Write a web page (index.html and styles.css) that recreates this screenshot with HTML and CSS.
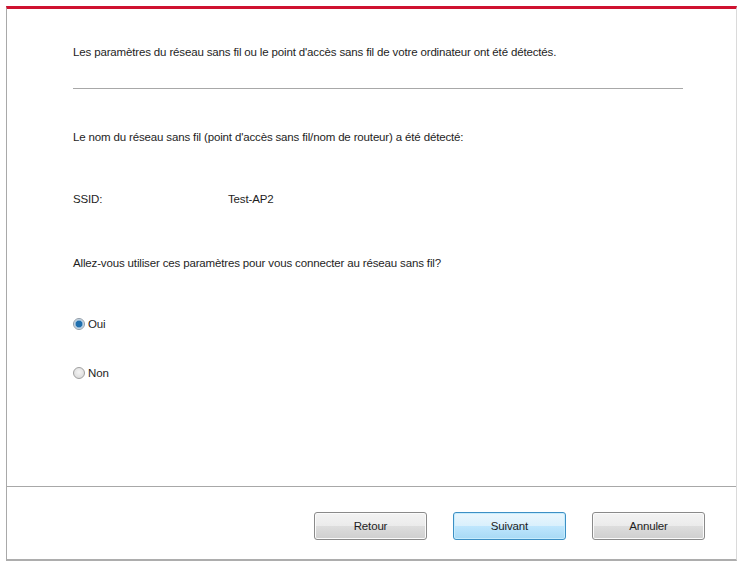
FILE: index.html
```html
<!DOCTYPE html>
<html lang="fr">
<head>
<meta charset="utf-8">
<title>Réseau sans fil</title>
<link rel="stylesheet" href="styles.css">
</head>
<body>
<div class="window">
  <div class="main">
    <p class="line first">Les paramètres du réseau sans fil ou le point d'accès sans fil de votre ordinateur ont été détectés.</p>
    <div class="sep"></div>
    <p class="line l2">Le nom du réseau sans fil (point d'accès sans fil/nom de routeur) a été détecté:</p>
    <div class="line ssid"><span class="ssid-label">SSID:</span><span>Test-AP2</span></div>
    <p class="line q">Allez-vous utiliser ces paramètres pour vous connecter au réseau sans fil?</p>
    <div class="line radio oui"><span class="dot checked"></span><span>Oui</span></div>
    <div class="line radio non"><span class="dot"></span><span>Non</span></div>
  </div>
  <div class="footer">
    <button class="btn">Retour</button>
    <button class="btn primary">Suivant</button>
    <button class="btn">Annuler</button>
  </div>
</div>
</body>
</html>
```
FILE: styles.css
```css
html, body {
  margin: 0;
  padding: 0;
  background: #ffffff;
}
body {
  font-family: "Liberation Sans", Arial, sans-serif;
  font-size: 11.5px;
  letter-spacing: -0.15px;
  color: #1e1e1e;
  padding-top: 6px;
}
.window {
  margin-left: 6px;
  width: 731px;
  height: 555px;
  box-sizing: border-box;
  border-top: 3px solid #cf1230;
  border-left: 1px solid #a9a9a9;
  border-right: 1px solid #dadada;
  border-bottom: 2px solid #adadad;
  display: flex;
  flex-direction: column;
}
.main {
  flex: 1;
  padding-left: 66px;
  padding-top: 36px;
}
.line {
  margin: 0;
  line-height: 14px;
  height: 14px;
  white-space: nowrap;
}
.sep {
  margin-top: 29px;
  width: 610px;
  height: 1px;
  background: #a8a8a8;
}
.l2 { margin-top: 41px; }
.ssid { margin-top: 48px; display: flex; }
.ssid-label { width: 155px; }
.q { margin-top: 50px; }
.radio { display: flex; align-items: center; gap: 3px; }
.oui { margin-top: 47px; }
.non { margin-top: 35px; }
.dot {
  width: 10px;
  height: 10px;
  border-radius: 50%;
  border: 1px solid #a0a0a0;
  background: radial-gradient(circle at 50% 40%, #f4f4f4, #d6d6d6);
  box-sizing: content-box;
}
.dot.checked {
  border-color: #8f9ba6;
  background: radial-gradient(circle, #1f6fae 0 3px, #8fb6d6 3.6px, #dfe7ee 5px);
}
.footer {
  height: 73px;
  box-sizing: border-box;
  border-top: 1px solid #a8a8a8;
  display: flex;
  justify-content: flex-end;
  align-items: flex-start;
  gap: 26px;
  padding-top: 25px;
  padding-right: 31px;
}
.btn {
  width: 113px;
  height: 28px;
  font-family: "Liberation Sans", Arial, sans-serif;
  font-size: 11.5px;
  letter-spacing: -0.15px;
  color: #1e1e1e;
  border: 1px solid #8a8a8a;
  border-radius: 3px;
  background: linear-gradient(#f3f3f3 0%, #ebebeb 50%, #dddddd 51%, #cfcfcf 100%);
  box-shadow: inset 0 0 0 1px #fbfbfb;
  padding: 0;
}
.btn.primary {
  border-color: #3c8fc4;
  background: linear-gradient(#eaf6fd 0%, #d9f0fc 50%, #bee6fd 51%, #a7d9f5 100%);
  box-shadow: inset 0 0 0 1px #c6ecfd;
}
```
